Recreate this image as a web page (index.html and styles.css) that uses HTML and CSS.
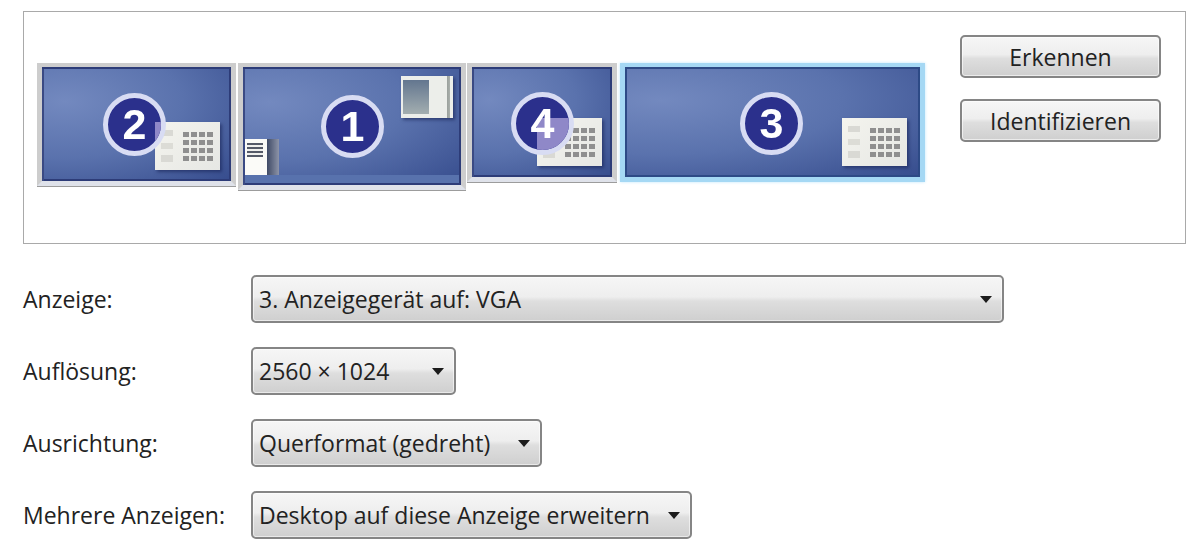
FILE: index.html
```html
<!DOCTYPE html>
<html lang="de">
<head><meta charset="UTF-8">
<title>Anzeige</title>
<link rel="stylesheet" href="styles.css">
</head>
<body>

<section class="panel">
  <div class="canvas">
    <div class="mon mon-2">
      <div class="badge"><i class="veil"></i><b>2</b></div>
      <div class="widget"><div class="keys"><i></i><i></i><i></i><i></i><i></i><i></i><i></i><i></i><i></i><i></i><i></i><i></i><i></i><i></i><i></i><i></i></div></div>
    </div>
    <div class="mon mon-1">
      <div class="badge"><b>1</b></div>
      <div class="thumb"><i></i></div>
      <div class="sidebar"><i></i></div>
      <div class="taskbar"></div>
    </div>
    <div class="mon mon-4">
      <div class="badge"><i class="veil"></i><b>4</b></div>
      <div class="widget"><div class="keys"><i></i><i></i><i></i><i></i><i></i><i></i><i></i><i></i><i></i><i></i><i></i><i></i><i></i><i></i><i></i><i></i></div></div>
    </div>
    <div class="mon mon-3">
      <div class="badge"><b>3</b></div>
      <div class="widget"><div class="keys"><i></i><i></i><i></i><i></i><i></i><i></i><i></i><i></i><i></i><i></i><i></i><i></i><i></i><i></i><i></i><i></i></div></div>
    </div>
  </div>
  <div class="actions">
    <button class="btn">Erkennen</button>
    <button class="btn">Identifizieren</button>
  </div>
</section>

<section class="form">
  <div class="row">
    <label>Anzeige:</label>
    <button class="combo combo-wide"><span>3. Anzeigegerät auf: VGA</span><i class="arrow"></i></button>
  </div>
  <div class="row">
    <label>Auflösung:</label>
    <button class="combo combo-res"><span>2560 × 1024</span><i class="arrow"></i></button>
  </div>
  <div class="row">
    <label>Ausrichtung:</label>
    <button class="combo combo-orient"><span>Querformat (gedreht)</span><i class="arrow"></i></button>
  </div>
  <div class="row">
    <label>Mehrere Anzeigen:</label>
    <button class="combo combo-multi"><span>Desktop auf diese Anzeige erweitern</span><i class="arrow"></i></button>
  </div>
</section>

</body>
</html>
```

FILE: styles.css
```css
*,*::before,*::after{box-sizing:border-box;margin:0;padding:0}
body{
  background:#fff;
  color:#222;
  font-family:"Open Sans","Noto Sans",sans-serif;
  font-size:23px;
  padding:11px 14px 0 23px;
  overflow:hidden;
}

/* === PANEL === */
.panel{
  display:flex;
  height:233px;
  border:1px solid #a9a9a9;
}
.canvas{position:relative;flex:1}
.actions{
  display:flex;
  flex-direction:column;
  gap:21px;
  padding:23px 24px 0 0;
}
.btn{
  width:201px;
  height:43px;
  border:2px solid #858585;
  border-radius:5px;
  background:linear-gradient(#f6f6f6 0%,#eeeeee 45%,#dedede 55%,#cfcfcf 100%);
  box-shadow:inset 0 0 0 1px rgba(255,255,255,.6);
  font:inherit;
  color:#222;
}

/* === MONITORS === */
.mon{
  position:absolute;
  border:solid #cdcdcd;
  border-width:4px 5px 5px 5px;
  border-bottom-color:#dfe2ea;
  background:radial-gradient(ellipse at 12% 30%,#7389bf 0%,#5a72ad 50%,#364c8d 100%);
  box-shadow:inset 0 2px 0 #2d3c78,inset 2px 0 0 #3a4a84,inset -2px 0 0 #2d3c78,inset 0 -2px 0 #2d3c78,0 1px 0 #9c9c9c;
  filter:blur(.4px);
}
.mon-2{left:13px;top:51px;width:199px;height:123px}
.mon-1{left:214px;top:51px;width:228px;height:127px}
.mon-4{left:443px;top:51px;width:150px;height:119px}
.mon-3{
  left:596px;top:51px;width:305px;height:119px;
  border-color:#a5d8f4;
  box-shadow:inset 0 2px 0 #2d4a86,inset 2px 0 0 #2d4a86,inset -2px 0 0 #2d4a86,inset 0 -2px 0 #2d4a86,0 0 3px #bfe6fb;
}

.badge{
  position:absolute;
  z-index:2;
  width:63px;
  height:63px;
  border:5px solid #d8dcf3;
  border-radius:50%;
  background:#2b308c;
  overflow:hidden;
  display:flex;
  align-items:center;
  justify-content:center;
  color:#fff;
  font:bold 43px/1 "Liberation Sans",sans-serif;
}
.badge b{position:relative}
.veil{position:absolute;background:#8f88c8}
.mon-2 .badge{left:61px;top:26px}
.mon-1 .badge{left:78px;top:28px}
.mon-4 .badge{left:39px;top:25px}
.mon-3 .badge{left:115px;top:25px}
.mon-2 .veil{left:47px;top:24px;width:10px;height:30px}
.mon-4 .veil{left:21px;top:21px;width:40px;height:40px}

/* calendar-like desktop widget */
.widget{
  position:absolute;
  width:65px;
  height:48px;
  background:linear-gradient(135deg,#f4f4ee,#e6e7e4);
  box-shadow:2px 2px 3px rgba(20,30,80,.55);
  padding:10px 7px 0 0;
}
.widget::before{
  content:"";
  position:absolute;
  left:6px;top:8px;
  width:12px;height:32px;
  background:linear-gradient(#d9d9d4 0 6px,transparent 6px 13px,#dcdcd6 13px 19px,transparent 19px 25px,#d9d9d4 25px);
}
.mon-2 .widget{left:113px;top:55px}
.mon-4 .widget{left:65px;top:51px}
.mon-3 .widget{left:217px;top:51px}
.keys{
  display:grid;
  grid-template-columns:repeat(4,6px);
  grid-auto-rows:5px;
  gap:3px 2px;
  justify-content:end;
}
.keys i{background:#8f8f8f}

/* open windows on screen 1 */
.thumb{
  position:absolute;
  left:158px;top:9px;
  width:52px;height:42px;
  padding:4px 3px 4px 2px;
  background:linear-gradient(90deg,#eceeea 0,#eceeea 46px,#9aa09c 46px,#aab0ac 49px,#eceeea 49px);
  box-shadow:2px 2px 3px rgba(20,30,80,.55);
}
.thumb i{
  display:block;
  width:26px;height:100%;
  background:linear-gradient(#63768f,#a3aeb0);
}
.sidebar{
  position:absolute;
  left:2px;top:72px;
  width:34px;height:37px;
  background:linear-gradient(90deg,#fbfbf8 0,#fbfbf8 22px,#3f4a66 22px,#8d94a8 34px);
}
.sidebar i{
  position:absolute;
  left:2px;top:4px;
  width:16px;height:14px;
  background:repeating-linear-gradient(#555a68 0 2px,#f0f0ee 2px 4px);
}
.taskbar{
  position:absolute;
  left:2px;right:2px;bottom:2px;
  height:8px;
  background:#5872ad;
}

/* === FORM === */
.form{
  display:flex;
  flex-direction:column;
  gap:24px;
  margin-top:31px;
}
.row{display:flex;align-items:center;height:48px}
.row label{width:228px}
.combo{
  display:flex;
  align-items:center;
  justify-content:space-between;
  height:48px;
  padding:0 10px 0 6px;
  border:2px solid #858585;
  border-radius:5px;
  background:linear-gradient(#f6f6f6 0%,#eeeeee 45%,#dedede 55%,#cfcfcf 100%);
  box-shadow:inset 0 0 0 1px rgba(255,255,255,.55);
  font:inherit;
  color:#222;
}
.combo-wide{width:753px}
.combo-res{width:205px}
.combo-orient{width:291px}
.combo-multi{width:441px}
.arrow{
  width:0;height:0;
  border:solid transparent;
  border-width:7px 6px 0 6px;
  border-top-color:#1c1c1c;
}
```
